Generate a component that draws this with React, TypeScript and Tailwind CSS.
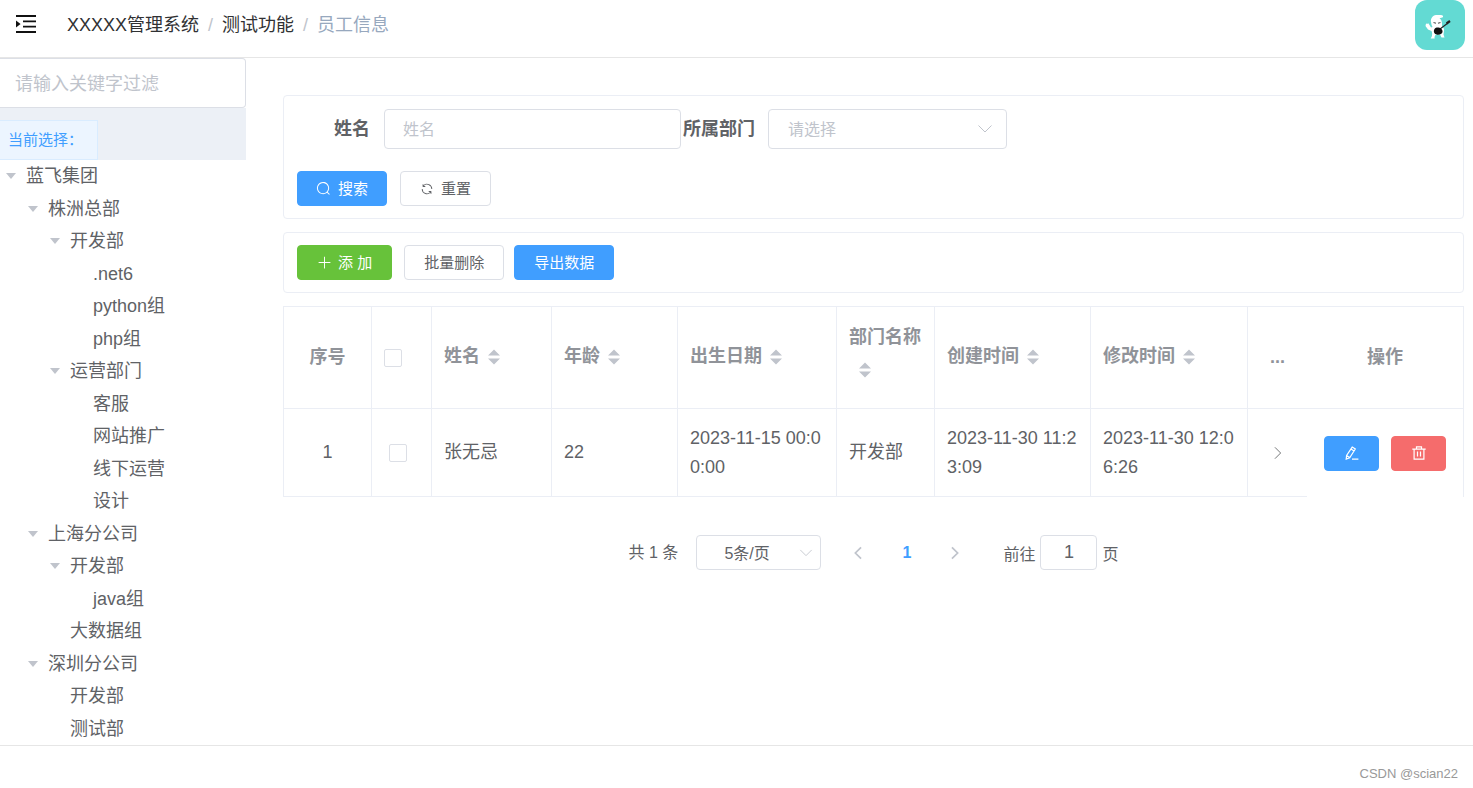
import { useState } from "react";
import type { ReactNode } from "react";

interface TreeNode {
  label: string;
  level: number;
  open?: boolean;
}

const departments: TreeNode[] = [
  { label: "蓝飞集团", level: 0, open: true },
  { label: "株洲总部", level: 1, open: true },
  { label: "开发部", level: 2, open: true },
  { label: ".net6", level: 3 },
  { label: "python组", level: 3 },
  { label: "php组", level: 3 },
  { label: "运营部门", level: 2, open: true },
  { label: "客服", level: 3 },
  { label: "网站推广", level: 3 },
  { label: "线下运营", level: 3 },
  { label: "设计", level: 3 },
  { label: "上海分公司", level: 1, open: true },
  { label: "开发部", level: 2, open: true },
  { label: "java组", level: 3 },
  { label: "大数据组", level: 2 },
  { label: "深圳分公司", level: 1, open: true },
  { label: "开发部", level: 2 },
  { label: "测试部", level: 2 },
];

// Left padding for each depth of the tree
const indents = ["pl-1.5", "pl-7", "pl-[50px]", "pl-[73px]"];

const employees = [
  {
    id: 1,
    name: "张无忌",
    age: 22,
    birthday: "2023-11-15 00:00:00",
    department: "开发部",
    createdAt: "2023-11-30 11:23:09",
    updatedAt: "2023-11-30 12:06:26",
  },
];

/** Element-style outline icons on a 1024 grid */
function Icon({ d, className }: { d: string; className: string }) {
  return (
    <svg viewBox="0 0 1024 1024" fill="currentColor" className={className} aria-hidden="true">
      <path d={d} />
    </svg>
  );
}

const searchPath =
  "m795.904 750.72 124.992 124.928a32 32 0 0 1-45.248 45.248L750.656 795.904a416 416 0 1 1 45.248-45.248zM480 832a352 352 0 1 0 0-704 352 352 0 0 0 0 704";
const refreshPath =
  "M771.776 794.88A384 384 0 0 1 128 512h64a320 320 0 0 0 555.712 216.448H654.72a32 32 0 1 1 0-64h149.056a32 32 0 0 1 32 32v148.928a32 32 0 1 1-64 0v-50.56zM276.288 295.616h92.992a32 32 0 0 1 0 64H220.16a32 32 0 0 1-32-32V178.56a32 32 0 0 1 64 0v50.56A384 384 0 0 1 896.128 512h-64a320 320 0 0 0-555.776-216.384z";
const plusPath =
  "M480 480V128a32 32 0 0 1 64 0v352h352a32 32 0 1 1 0 64H544v352a32 32 0 1 1-64 0V544H128a32 32 0 0 1 0-64z";

function Chevron({ className }: { className: string }) {
  return (
    <svg viewBox="0 0 16 16" fill="none" stroke="currentColor" className={className} aria-hidden="true">
      <path d="M1.5 4.5 8 11l6.5-6.5" />
    </svg>
  );
}

function FoldIcon() {
  return (
    <svg viewBox="0 0 20 18" className="h-[18px] w-5" aria-hidden="true">
      <path d="M0 1h20M7 6.3h13M7 11.6h13M0 17h20" stroke="#111" strokeWidth="1.8" />
      <path d="M0 5.6v7L4.6 9z" fill="#111" />
    </svg>
  );
}

function EditIcon() {
  return (
    <svg viewBox="0 0 14 14" fill="none" stroke="currentColor" className="size-3.5" aria-hidden="true">
      <path
        d="M7.2 1.1 10.3 3 4.7 11.7 1.2 13.1l.4-3.6zM6 3.1l3 1.9M1.6 9.6l3 2M7 13.2h6.4"
        strokeWidth="1.2"
      />
    </svg>
  );
}

function TrashIcon() {
  return (
    <svg viewBox="0 0 14 14" fill="none" stroke="currentColor" className="size-3.5" aria-hidden="true">
      <path d="M.3 3.2h13.4M4.5 3V.9h5V3M2.1 3.2v10h9.8v-10M5.5 5.6v5M8.5 5.6v5" strokeWidth="1.2" />
    </svg>
  );
}

function Avatar() {
  return (
    <svg viewBox="0 0 50 50" className="size-[50px] rounded-xl bg-[#63dad3]" role="img" aria-label="avatar">
      <path
        d="M16 22c-.6-3.500 1.500-6.500 5-7 2-.3 3.500.2 5 0 1.500 0 2.300.8 2 2-.8.9-2.500.6-3.500 1.200 1.700 1.200 2.500 3 2.500 5.300v3c1.700.6 2.200 2.500 2 4.500l-.5 3.500 1 3h-3l-1.500-3-4.500.3-1 2.200.2 1.500h-4l1.300-2.500c.3-2 .2-3.500-.5-5l-3.500-1.500-2.500-3.500.5-2.500 1.500.5.5-1 1.500 2 1.500 2.500 1.500-.5c-.8-1.400-1.300-3-1.500-5z"
        fill="#fff"
      />
      <path d="M18.500 22.500l2.500.8M23 23.300l2.500-.8" stroke="#555" strokeWidth="1.1" />
      <path d="m25 29 8-6" stroke="#222" strokeWidth="1.2" />
      <path d="m31.500 23.500 3.500-2.500" stroke="#222" strokeWidth="2.200" />
      <path d="M19.500 29c1-1.800 3-1.500 4-1.500 1.500 0 2 .8 3 1.500 1.500 1.500 1.500 4-.5 5s-5 1-6.500-.8c-.9-1.200-.8-2.800 0-4.200z" fill="#111" />
    </svg>
  );
}

function SortIcon({ className = "" }: { className?: string }) {
  return (
    <svg viewBox="0 0 12 16" fill="#c0c4cc" className={`inline-block h-4 w-3 ${className}`} aria-hidden="true">
      <path d="M0 6.500 6 .5l6 6zM0 9.500h12l-6 6z" />
    </svg>
  );
}

/** Column title with its sort carets */
function SortTitle({ children }: { children: ReactNode }) {
  return (
    <button type="button" className="flex flex-wrap items-center gap-x-2 pb-0.5 text-left font-bold">
      {children}
      <SortIcon />
    </button>
  );
}

function Checkbox({ label }: { label: string }) {
  return (
    <input
      type="checkbox"
      aria-label={label}
      className="block size-[18px] appearance-none rounded-xs border border-[#dcdfe6] bg-white checked:bg-[#409eff]"
    />
  );
}

function Button({
  tone = "plain",
  className = "px-[19px]",
  label,
  children,
}: {
  tone?: "plain" | "primary" | "success" | "danger";
  className?: string;
  label?: string;
  children: ReactNode;
}) {
  const tones = {
    plain: "border-[#dcdfe6] bg-white text-[#606266]",
    primary: "border-[#409eff] bg-[#409eff] text-white",
    success: "border-[#67c23a] bg-[#67c23a] text-white",
    danger: "border-[#f56c6c] bg-[#f56c6c] text-white",
  };
  return (
    <button
      type="button"
      aria-label={label}
      className={`flex h-[35px] items-center justify-center rounded border text-[15px] ${tones[tone]} ${className}`}
    >
      {children}
    </button>
  );
}

function DepartmentTree() {
  return (
    <aside className="flex w-[246px] shrink-0 flex-col">
      <input
        type="text"
        aria-label="过滤部门"
        placeholder="请输入关键字过滤"
        className="h-[50px] w-full rounded-r border border-l-0 border-[#dcdfe6] px-[15px] pt-0.5 text-lg placeholder-[#c0c4cc] outline-none"
      />
      <div className="flex h-[52px] items-end bg-[#ecf0f6]">
        <span className="flex h-10 w-[98px] items-center border border-l-0 border-[#d9ecff] bg-[#ecf5ff] pl-2 text-[15px] text-[#409eff]">
          当前选择：
        </span>
      </div>
      <ul className="flex flex-1 flex-col">
        {departments.map((node, i) => (
          <li key={i} className={`flex min-h-8 flex-1 items-center gap-2.5 ${indents[node.level]}`}>
            <svg viewBox="0 0 10 6" className="h-1.5 w-2.5 shrink-0" aria-hidden="true">
              {node.open && <path d="M0 0h10L5 6z" fill="#c0c4cc" />}
            </svg>
            {node.label}
          </li>
        ))}
      </ul>
    </aside>
  );
}

function SearchForm() {
  const [name, setName] = useState("");

  return (
    <form className="rounded border border-[#ebeef5] px-[13px] pt-[13px] pb-3">
      <div className="flex items-center">
        <label htmlFor="name" className="w-[87px] pr-[14px] text-right font-bold">
          姓名
        </label>
        <input
          id="name"
          type="text"
          value={name}
          onChange={(e) => setName(e.target.value)}
          placeholder="姓名"
          className="h-10 w-[297px] rounded border border-[#dcdfe6] px-[18px] pt-0.5 text-base placeholder-[#c0c4cc] outline-none"
        />
        <label htmlFor="department" className="w-[87px] pr-[13px] text-right font-bold whitespace-nowrap">
          所属部门
        </label>
        <div className="relative w-[239px]">
          <select
            id="department"
            className="h-10 w-full appearance-none rounded border border-[#dcdfe6] px-[19px] pt-0.5 text-base text-[#c0c4cc] outline-none"
          >
            <option>请选择</option>
          </select>
          <Chevron className="pointer-events-none absolute top-3 right-3.5 size-4 text-[#c0c4cc]" />
        </div>
      </div>
      <div className="mt-[22px] flex gap-[13px]">
        <Button tone="primary" className="gap-[7px] px-[18px]">
          <Icon d={searchPath} className="size-[15px]" />
          搜索
        </Button>
        <Button className="gap-[7px] px-[19px]">
          <Icon d={refreshPath} className="size-[14px]" />
          重置
        </Button>
      </div>
    </form>
  );
}

function EmployeeTable() {
  const head = "border-r border-b border-[#ebeef5] px-3";
  const cell = "border-r border-b border-[#ebeef5] px-3 break-all";

  return (
    <table className="mt-[13px] w-full table-fixed border-separate border-spacing-0 border-t border-l border-[#ebeef5] leading-[29px]">
      <colgroup>
        <col className="w-[88px]" />
        <col className="w-[60px]" />
        <col className="w-[120px]" />
        <col className="w-[126px]" />
        <col className="w-[159px]" />
        <col className="w-[98px]" />
        <col className="w-[156px]" />
        <col className="w-[157px]" />
        <col className="w-[59px]" />
        <col />
      </colgroup>
      <thead className="text-left text-[#909399]">
        <tr className="h-[102px]">
          <th className={`${head} text-center`}>序号</th>
          <th className={head}>
            <Checkbox label="全选" />
          </th>
          <th className={head}>
            <SortTitle>姓名</SortTitle>
          </th>
          <th className={head}>
            <SortTitle>年龄</SortTitle>
          </th>
          <th className={head}>
            <SortTitle>出生日期</SortTitle>
          </th>
          <th className="border-r border-b border-[#ebeef5] pb-2 pl-3">
            <button type="button" className="block text-left font-bold">
              部门名称
              <span className="flex pl-2.5">
                <SortIcon className="mt-2.5 mb-1.5" />
              </span>
            </button>
          </th>
          <th className={head}>
            <SortTitle>创建时间</SortTitle>
          </th>
          <th className={head}>
            <SortTitle>修改时间</SortTitle>
          </th>
          <th className="border-b border-[#ebeef5] text-center">...</th>
          <th className={`${head} text-center`}>操作</th>
        </tr>
      </thead>
      <tbody>
        {employees.map((employee, i) => (
          <tr key={employee.id} className="h-[88px]">
            <td className={`${cell} text-center`}>{i + 1}</td>
            <td className="border-r border-b border-[#ebeef5] pl-[17px]">
              <Checkbox label={`选择 ${employee.name}`} />
            </td>
            <td className={cell}>{employee.name}</td>
            <td className={cell}>{employee.age}</td>
            <td className={cell}>{employee.birthday}</td>
            <td className={cell}>{employee.department}</td>
            <td className={cell}>{employee.createdAt}</td>
            <td className={cell}>{employee.updatedAt}</td>
            <td className="border-b border-[#ebeef5]">
              <button type="button" aria-label="展开" className="mx-auto block">
                <Chevron className="size-3.5 -rotate-90" />
              </button>
            </td>
            <td className="border-r border-[#ebeef5]">
              <div className="flex justify-center gap-3">
                <Button tone="primary" className="w-[55px]" label="编辑">
                  <EditIcon />
                </Button>
                <Button tone="danger" className="w-[55px]" label="删除">
                  <TrashIcon />
                </Button>
              </div>
            </td>
          </tr>
        ))}
      </tbody>
    </table>
  );
}

function Pagination() {
  return (
    <nav aria-label="分页" className="mt-[38px] flex items-center justify-center text-base">
      <span>共 1 条</span>
      <div className="relative ml-[18px] w-[125px]">
        <select
          aria-label="每页条数"
          className="h-[35px] w-full appearance-none rounded border border-[#dcdfe6] pt-0.5 pl-[27px] outline-none"
        >
          <option>5条/页</option>
        </select>
        <Chevron className="pointer-events-none absolute top-[11px] right-2 size-3.5 text-[#c0c4cc]" />
      </div>
      <button type="button" aria-label="上一页" className="ml-[30px] text-[#c0c4cc]">
        <Chevron className="size-3.5 rotate-90 stroke-2" />
      </button>
      <button type="button" className="w-[83px] font-bold text-[#409eff]">
        1
      </button>
      <button type="button" aria-label="下一页" className="text-[#c0c4cc]">
        <Chevron className="size-3.5 -rotate-90 stroke-2" />
      </button>
      <label htmlFor="page" className="ml-[41px] pt-1">
        前往
      </label>
      <input
        id="page"
        type="text"
        defaultValue="1"
        className="mx-[5px] h-[35px] w-[57px] rounded border border-[#dcdfe6] text-center text-lg outline-none"
      />
      <span className="pt-1">页</span>
    </nav>
  );
}

export default function App() {
  return (
    <div className="flex min-h-screen flex-col bg-white font-['Liberation_Sans','Noto_Sans_CJK_SC',sans-serif] text-lg leading-6 text-[#606266]">
      <header className="flex h-[58px] items-start justify-between border-b border-[#e6e6e6] pr-2 pl-4">
        <div className="flex h-[50px] items-center">
          <button type="button" aria-label="折叠菜单" className="pb-0.5">
            <FoldIcon />
          </button>
          <nav aria-label="面包屑" className="ml-[31px] flex gap-[9px] text-[#303133]">
            <a href="#">XXXXX管理系统</a>
            <span className="text-[#c0c4cc]">/</span>
            <a href="#">测试功能</a>
            <span className="text-[#c0c4cc]">/</span>
            <span className="text-[#97a8be]">员工信息</span>
          </nav>
        </div>
        <Avatar />
      </header>
      <div className="flex flex-1">
        <DepartmentTree />
        <main className="min-w-0 flex-1 pt-[37px] pr-[9px] pl-[37px]">
          <SearchForm />
          <div className="mt-[13px] flex rounded border border-[#ebeef5] px-[13px] py-3">
            <Button tone="success" className="mr-3 gap-[6px] px-[19px]">
              <Icon d={plusPath} className="size-[15px]" />
              添 加
            </Button>
            <Button className="mr-2.5 px-[19px]">批量删除</Button>
            <Button tone="primary">导出数据</Button>
          </div>
          <EmployeeTable />
          <Pagination />
        </main>
      </div>
      <footer className="flex h-[43px] items-center justify-end border-t border-[#e6e6e6] pt-3.5 pr-[15px] text-[13px] text-[#999]">
        CSDN @scian22
      </footer>
    </div>
  );
}
